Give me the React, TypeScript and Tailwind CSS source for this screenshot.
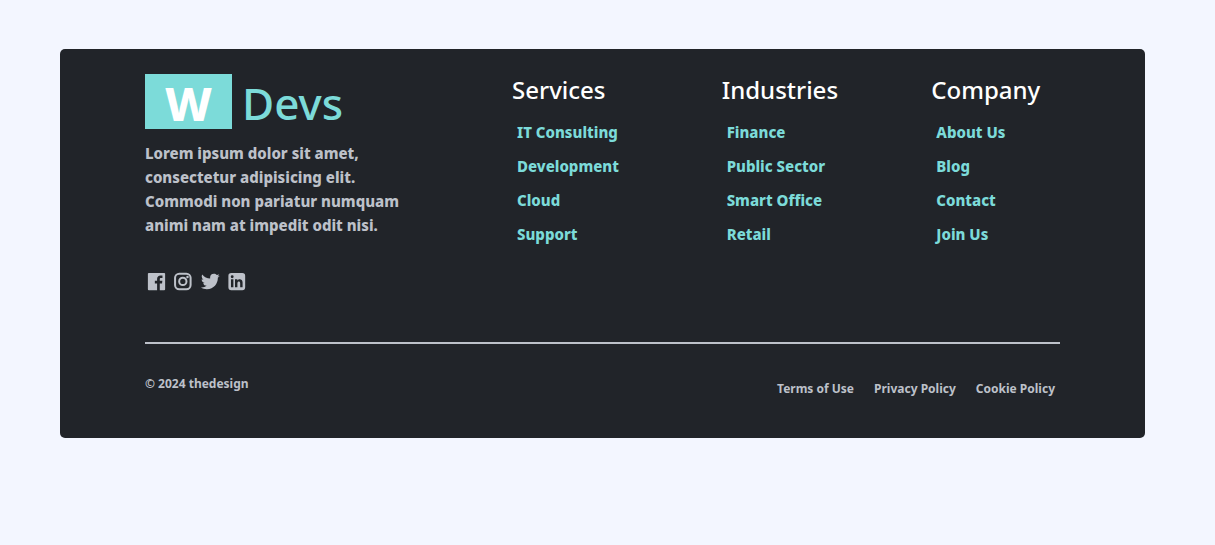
import { BiLogoFacebookSquare, BiLogoTwitter } from "react-icons/bi";

const columns = [
  { title: "Services", links: ["IT Consulting", "Development", "Cloud", "Support"] },
  { title: "Industries", links: ["Finance", "Public Sector", "Smart Office", "Retail"] },
  { title: "Company", links: ["About Us", "Blog", "Contact", "Join Us"] },
];

function InstagramIcon({ size }: { size: number }) {
  return (
    <svg width={size} height={size} viewBox="0 0 24 24" fill="none" stroke="currentColor" strokeWidth="2.1">
      <rect x="3.2" y="3.8" width="16.2" height="16.2" rx="4.4" />
      <circle cx="11.3" cy="11.9" r="3.8" />
      <circle cx="16.2" cy="7.3" r="1.3" fill="currentColor" stroke="none" />
    </svg>
  );
}

function LinkedInIcon({ size }: { size: number }) {
  return (
    <svg width={size} height={size} viewBox="0 0 24 24" fill="currentColor">
      <path
        fillRule="evenodd"
        d="M5.500 3h11.500A3 3 0 0 1 20 6v12a3 3 0 0 1-3 3h-11.500a3 3 0 0 1-3-3V6a3 3 0 0 1 3-3zM5.200 9.700v8.300h2.500V9.700zM6.450 5.500a1.500 1.500 0 1 0 0 3 1.500 1.500 0 0 0 0-3zM9.400 9.700v8.300h2.500v-4.300c0-2.300 2.900-2.400 2.900 0v4.300h2.500v-5c0-4-4-4.300-5.400-2.100V9.700z"
      />
    </svg>
  );
}

const socials = [
  { name: "Facebook", Icon: BiLogoFacebookSquare },
  { name: "Instagram", Icon: InstagramIcon },
  { name: "Twitter", Icon: BiLogoTwitter },
  { name: "LinkedIn", Icon: LinkedInIcon },
];

const legal = ["Terms of Use", "Privacy Policy", "Cookie Policy"];

export default function App() {
  return (
    <div className="min-h-screen bg-[#f3f6ff] pt-[49px] pr-[70px] pl-[60px] font-['Noto_Sans',sans-serif]">
      <footer className="rounded-[5px] bg-[#212429] px-[85px] pt-[25px] pb-[39px] text-[#bdc1c9]">
        <div className="grid grid-cols-[2fr_3fr]">
          <div>
            <a href="#" className="flex items-start gap-[10px] text-[44px] leading-[51px] text-[#7cdbd9]">
              <span className="bg-[#7cdbd9] px-5 pt-1 text-[47px] font-extrabold text-white">W</span>
              <span className="pt-1 font-medium">Devs</span>
            </a>
            <p className="mt-3 max-w-[270px] text-[15px] leading-6 font-extrabold">
              Lorem ipsum dolor sit amet, consectetur adipisicing elit. Commodi non pariatur numquam
              animi nam at impedit odit nisi.
            </p>
            <div className="mt-[33px] flex gap-1">
              {socials.map(({ name, Icon }) => (
                <a key={name} href="#" aria-label={name}>
                  <Icon size={23} />
                </a>
              ))}
            </div>
          </div>
          <div className="grid grid-cols-3 gap-[81px] pl-px">
            {columns.map(({ title, links }) => (
              <nav key={title} aria-label={title}>
                <h2 className="text-[24px] leading-8 font-medium text-white">{title}</h2>
                <ul className="mt-[14px] flex flex-col gap-[10px] pl-[5px] text-[15px] leading-6 font-extrabold whitespace-nowrap text-[#7cdbd9]">
                  {links.map((link) => (
                    <li key={link}>
                      <a href="#">{link}</a>
                    </li>
                  ))}
                </ul>
              </nav>
            ))}
          </div>
        </div>
        <hr className="mt-[49px] border-t-2 border-[#bdc1c9]" />
        <div className="mt-[30px] flex items-start justify-between text-[12px] leading-5 font-bold">
          <p>© 2024 thedesign</p>
          <ul className="flex gap-5 pt-[5px] pr-[5px]">
            {legal.map((item) => (
              <li key={item}>
                <a href="#">{item}</a>
              </li>
            ))}
          </ul>
        </div>
      </footer>
    </div>
  );
}
